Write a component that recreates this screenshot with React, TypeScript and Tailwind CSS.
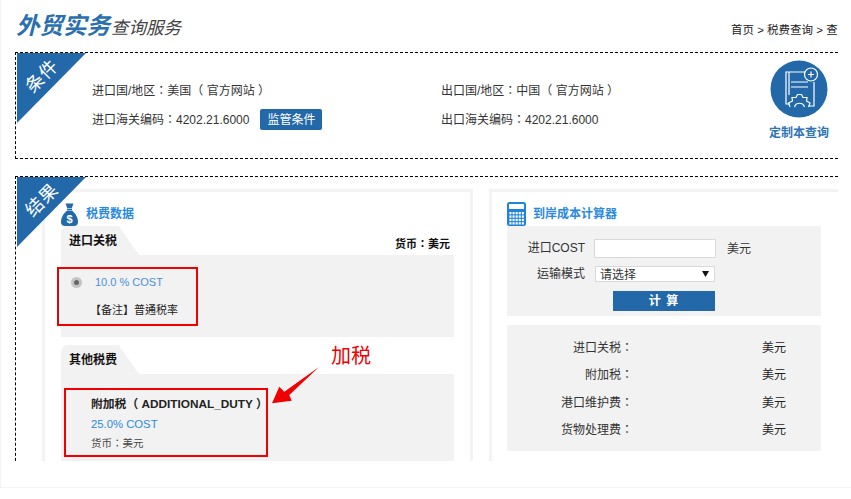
const font = 'font-["Liberation_Sans","Noto_Sans_CJK_TC",sans-serif]';

function Corner({ label }: { label: string }) {
  return (
    <div className="absolute left-[1px] top-[0px] h-[70px] w-[69px]">
      <svg width="69" height="70" viewBox="0 0 69 70" className="absolute inset-0">
        <polygon points="0,0 69,0 0,70" fill="#2369a9" />
      </svg>
      <span className="absolute left-[6px] top-[11px] -rotate-45 text-[18px] leading-[24px] tracking-[1px] text-white">
        {label}
      </span>
    </div>
  );
}

function MoneyBag() {
  return (
    <svg width="17" height="23" viewBox="0 0 17 23">
      <path d="M4.5 0.5 L12.5 0.5 L10.8 5 L6.2 5 Z" fill="#2369a9" />
      <rect x="6" y="5.6" width="5" height="1.4" fill="#2369a9" />
      <path d="M6 7.6 L11 7.6 C14.5 10.5 17 15 17 19 C17 21.8 15.5 23 13 23 L4 23 C1.5 23 0 21.8 0 19 C0 15 2.5 10.5 6 7.6 Z" fill="#2369a9" />
      <text x="8.5" y="20" textAnchor="middle" fontSize="11" fontWeight="700" fill="#fff">$</text>
    </svg>
  );
}

function Calculator() {
  const cells: number[][] = [];
  for (let r = 0; r < 4; r++) for (let c = 0; c < 5; c++) cells.push([2.4 + c * 3.1, 10 + r * 3.4]);
  return (
    <svg width="19" height="24" viewBox="0 0 19 24">
      <rect x="0" y="0" width="19" height="24" rx="2.5" fill="#1f83dc" />
      <rect x="2" y="2" width="15" height="5" fill="#fff" />
      {cells.map(([x, y]) => (
        <rect key={`${x}-${y}`} x={x} y={y} width="2.1" height="2.3" fill="#fff" />
      ))}
    </svg>
  );
}

function CustomIcon() {
  return (
    <svg width="58" height="58" viewBox="0 0 58 58">
      <circle cx="29" cy="29" r="28.5" fill="#2369a9" />
      <g fill="none" stroke="#fff" strokeWidth="1.2">
        <path d="M35 12 L16 12 L16 44 L20 44" />
        <path d="M19 12 L19 35" />
        <path d="M44 22 L44 46 L39 46" />
        <path d="M21 22 L38 22 M21 27 L38 27" />
        <circle cx="41" cy="14.5" r="6.5" />
        <path d="M41 11.5 L41 17.5 M38 14.5 L44 14.5" />
        <path d="M20 47 L18.5 43 L22.5 41 L22 37.5 L26 37.5 L27.5 34.5 L31.5 34.5 L33 37.5 L37 37.5 L36.5 41 L40 43 L38.5 47" />
        <path d="M24.5 47 A5.2 5.2 0 0 1 34.5 47" />
      </g>
    </svg>
  );
}

function Tab({ label }: { label: string }) {
  return (
    <div className="h-[29px] w-[78px] rounded-tl-[7px] bg-[#f2f2f2] pl-[8px] pt-[7px] text-[12px] font-bold leading-[16px] text-[#111] [clip-path:polygon(0_0,74%_0,100%_100%,0_100%)]">
      {label}
    </div>
  );
}

const resultRows = ['进口关税：', '附加税：', '港口维护费：', '货物处理费：'];

export default function App() {
  return (
    <div className={`relative h-[488px] w-[851px] overflow-hidden border-b border-l border-[#f4f4f4] bg-white text-[12px] text-[#333] ${font}`}>
      <div className="h-[461px] w-[837px] overflow-hidden pl-[14px]">
        <header className="flex h-[52px] items-end justify-between">
          <div className="flex items-baseline pb-[11px] pl-[1px] italic">
            <span className="text-[23.5px] font-bold leading-[30px] text-[#2b6fae]">外贸实务</span>
            <span className="ml-[1px] text-[17.5px] leading-[24px] text-[#444]">查询服务</span>
          </div>
          <div className="w-[107px] overflow-hidden whitespace-nowrap pb-[15px] text-[11.5px] leading-[14px] text-[#222]">
            首页 &gt; 税费查询 &gt; 查
          </div>
        </header>

        <section className="relative flex h-[107px] border border-r-0 border-dashed border-black">
          <Corner label="条件" />
          <div className="w-[425px] pl-[76px] pt-[29px]">
            <div className="h-[18px] leading-[18px]">进口国/地区：美国（ 官方网站 ）</div>
            <div className="mt-[9px] flex h-[21px] items-center">
              <span>进口海关编码：4202.21.6000</span>
              <button type="button" className="ml-[11px] h-[21px] w-[62px] rounded-[2px] bg-[#2369a9] text-center text-[12px] text-white">
                监管条件
              </button>
            </div>
          </div>
          <div className="w-[328px] pt-[29px]">
            <div className="h-[18px] leading-[18px]">出口国/地区：中国（ 官方网站 ）</div>
            <div className="mt-[9px] flex h-[21px] items-center">出口海关编码：4202.21.6000</div>
          </div>
          <div className="flex flex-col items-center pt-[7px]">
            <CustomIcon />
            <div className="mt-[8px] whitespace-nowrap text-[12px] font-bold leading-[14px] text-[#2f74b5]">定制本查询</div>
          </div>
        </section>

        <section className="relative mt-[17px] flex h-[300px] border-l border-t border-dashed border-black pl-[26px] pt-[12px]">
          <Corner label="结果" />

          <div className="h-[300px] w-[431px] shrink-0 border-x-[3px] border-t-[3px] border-[#f3f3f3] px-[16px]">
            <div className="flex h-[34px] items-end">
              <MoneyBag />
              <span className="mb-[5px] ml-[8px] text-[12px] font-bold leading-[14px] text-[#2a8ae0]">税费数据</span>
            </div>
            <div className="flex items-end justify-between">
              <Tab label="进口关税" />
              <span className="mb-[3px] mr-[4px] text-[11px] font-bold leading-[16px] text-[#111]">货币：美元</span>
            </div>
            <div className="h-[82px] bg-[#f2f2f2] pt-[12px]">
              <div className="-ml-[4px] h-[59px] w-[141px] border-2 border-[#f00000]">
                <div className="flex h-[26px] items-center pl-[12px] pt-[1px]">
                  <span className="flex h-[11px] w-[11px] items-center justify-center rounded-full bg-[#c4c4c4]">
                    <span className="h-[5px] w-[5px] rounded-full bg-[#666]" />
                  </span>
                  <span className="ml-[13px] text-[11px] text-[#4a90e2]">10.0 % COST</span>
                </div>
                <div className="mt-[7px] pl-[31px] text-[11px] leading-[16px] text-[#222]">【备注】普通税率</div>
              </div>
            </div>

            <div className="mt-[8px]"><Tab label="其他税费" /></div>
            <div className="h-[90px] bg-[#f2f2f2] pt-[14px]">
              <div className="ml-[3px] h-[69px] w-[204px] border-2 border-[#f00000] pl-[25px] pt-[5px]">
                <div className="whitespace-nowrap text-[11.8px] font-bold leading-[18px] text-[#222]">附加税（ ADDITIONAL_DUTY ）</div>
                <div className="mt-[2px] text-[11.3px] leading-[18px] text-[#2a8ae0]">25.0% COST</div>
                <div className="mt-[2px] text-[10.5px] leading-[16px] text-[#444]">货币：美元</div>
              </div>
            </div>
          </div>

          <div className="ml-[16px] h-[300px] w-[349px] shrink-0 border-l-[3px] border-t-[3px] border-[#f3f3f3] pl-[15px]">
            <div className="flex h-[34px] items-end">
              <Calculator />
              <span className="mb-[5px] ml-[7px] text-[12px] font-bold leading-[14px] text-[#2a8ae0]">到岸成本计算器</span>
            </div>
            <div className="h-[90px] w-[314px] bg-[#f2f2f2] pt-[13px]">
              <div className="flex h-[19px] items-center">
                <span className="w-[78px] text-right leading-[19px]">进口COST</span>
                <input className="ml-[9px] h-[19px] w-[122px] border border-[#d9d9d9] bg-white" />
                <span className="ml-[11px]">美元</span>
              </div>
              <div className="mt-[8px] flex h-[16px] items-center">
                <span className="w-[78px] text-right">运输模式</span>
                <div className="relative ml-[10px] h-[16px] w-[120px]">
                  <select className="h-[16px] w-full appearance-none border border-[#d9d9d9] bg-white pl-[4px] pt-[1px] text-[12px] leading-[14px] text-[#333]">
                    <option>请选择</option>
                  </select>
                  <svg width="7" height="6" viewBox="0 0 7 6" className="absolute right-[6px] top-[5px]">
                    <polygon points="0,0 7,0 3.5,6" fill="#111" />
                  </svg>
                </div>
              </div>
              <button type="button" className="ml-[106px] mt-[9px] block h-[20px] w-[102px] bg-[#2369a9] text-center text-[12px] font-bold tracking-[1px] text-white">
                计 算
              </button>
            </div>
            <div className="mt-[9px] flex h-[126px] w-[314px] flex-col gap-[9.3px] bg-[#f2f2f2] pt-[14px]">
              {resultRows.map((row) => (
                <div key={row} className="flex h-[18px] items-center leading-[18px]">
                  <span className="w-[126px] text-right">{row}</span>
                  <span className="ml-[129px] text-[#222]">美元</span>
                </div>
              ))}
            </div>
          </div>
        </section>
      </div>

      <span className="absolute left-[330px] top-[343px] text-[20px] leading-[26px] text-[#f00000]">加税</span>
      <svg width="52" height="40" viewBox="0 0 52 40" className="absolute left-[270px] top-[366px]">
        <polygon points="48,1 18.3,29 20.7,34.7 1,37.3 8.3,20.7 13.3,25.7" fill="#f00000" />
      </svg>
    </div>
  );
}
